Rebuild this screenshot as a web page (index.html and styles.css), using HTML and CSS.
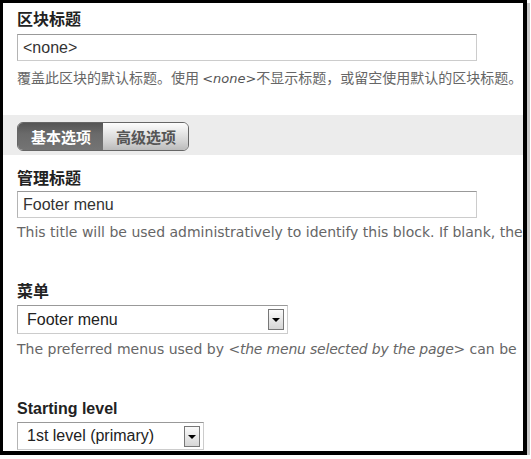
FILE: index.html
```html
<!DOCTYPE html>
<html lang="zh-CN">
<head>
  <meta charset="UTF-8" />
  <title>区块设置</title>
  <link rel="stylesheet" href="styles.css">
</head>
<body>

  <div class="frame">

    <!-- Título del bloque -->
    <div class="form-item item-title">
      <label class="label">区块标题</label>
      <input class="text-input" type="text" value="&lt;none&gt;" />
      <div class="description cjk">覆盖此区块的默认标题。使用 <em>&lt;none&gt;</em>不显示标题，或留空使用默认的区块标题。</div>
    </div>

    <!-- Pestañas -->
    <div class="tabs-bar">
      <div class="tabs">
        <span class="tab active">基本选项</span>
        <span class="tab">高级选项</span>
      </div>
    </div>

    <div class="form-item item-admin">
      <label class="label">管理标题</label>
      <input class="text-input" type="text" value="Footer menu" />
      <div class="description">This title will be used administratively to identify this block. If blank, the</div>
    </div>

    <div class="form-item item-menu">
      <label class="label">菜单</label>
      <div class="select select-menu">
        <span class="select-value">Footer menu</span>
        <span class="select-arrow"></span>
      </div>
      <div class="description">The preferred menus used by <em>&lt;the menu selected by the page&gt;</em> can be</div>
    </div>

    <div class="form-item item-level">
      <label class="label">Starting level</label>
      <div class="select select-level">
        <span class="select-value">1st level (primary)</span>
        <span class="select-arrow"></span>
      </div>
    </div>

  </div>

</body>
</html>
```

FILE: styles.css
```css
body {
  margin: 0;
  padding: 0;
  background: #fff;
  font-family: "Liberation Sans", "Noto Sans CJK SC", sans-serif;
}

/* Marco negro de la captura */
.frame {
  width: 527px;
  height: 455px;
  box-sizing: border-box;
  border-style: solid;
  border-color: #000;
  border-width: 3px 4px 4px 3px;
  box-shadow: 3px 3px 0 #c8c8c8;
  overflow: hidden;
  background: #fff;
}

.form-item {
  padding-left: 14px;
  white-space: nowrap;
}

.label {
  display: block;
  font-size: 16px;
  font-weight: bold;
  line-height: 20px;
  color: #222;
}

.text-input {
  display: block;
  box-sizing: border-box;
  width: 460px;
  height: 27px;
  margin: 0;
  padding: 0 5px;
  border: 1px solid #ccc;
  border-top-color: #999;
  border-left-color: #b4b4b4;
  font-family: "Liberation Sans", sans-serif;
  font-size: 16px;
  color: #333;
  background: #fff;
  outline: none;
}

.description {
  font-family: "DejaVu Sans", "Noto Sans CJK SC", sans-serif;
  font-size: 14px;
  line-height: 18px;
  color: #666;
}

.description em {
  color: #666;
  letter-spacing: -0.2px;
}

.description.cjk {
  font-family: "Noto Sans CJK SC", sans-serif;
  font-size: 14px;
}

.description.cjk em {
  font-family: "DejaVu Sans", sans-serif;
  font-size: 13px;
  letter-spacing: 0;
  color: #555;
}

/* Espaciados de cada campo */
.item-title .label { margin-top: 7px; }
.item-title .text-input { margin-top: 4px; }
.item-title .description { margin-top: 7px; }

.item-admin .label { margin-top: 14px; }
.item-admin .text-input { margin-top: 2px; }
.item-admin .description { margin-top: 5px; }

.item-menu .label { margin-top: 41px; }
.item-menu .select { margin-top: 3px; }
.item-menu .description { margin-top: 6px; }

.item-level .label { margin-top: 41px; }
.item-level .select { margin-top: 3px; }

/* Barra de pestañas */
.tabs-bar {
  margin-top: 27px;
  height: 40px;
  box-sizing: border-box;
  padding: 7px 0 0 14px;
  background: #ececec;
}

.tabs {
  display: inline-flex;
  height: 27px;
  border: 1px solid #666;
  border-radius: 6px;
  overflow: hidden;
}

.tab {
  display: flex;
  align-items: center;
  padding: 0 12px 0 13px;
  font-family: "Noto Sans CJK SC", sans-serif;
  font-size: 15px;
  font-weight: bold;
  color: #555;
  background: linear-gradient(to bottom, #fdfdfd, #d2d2d2 70%, #bbb);
}

.tab.active {
  color: #fff;
  background: linear-gradient(to bottom, #555, #6a6a6a 40%, #747474);
}

/* Selects */
.select {
  display: flex;
  align-items: center;
  justify-content: space-between;
  box-sizing: border-box;
  border: 1px solid #ccc;
  border-top-color: #999;
  border-left-color: #b4b4b4;
  padding: 0 3px 0 9px;
  font-size: 16px;
  color: #222;
  background: #fff;
}

.select-menu {
  width: 271px;
  height: 29px;
}

.select-level {
  width: 187px;
  height: 28px;
}

.select-arrow {
  position: relative;
  width: 16px;
  height: 21px;
  box-sizing: border-box;
  border: 1px solid #777;
  background: linear-gradient(to bottom, #fafafa, #d6d6d6);
}

.select-arrow::before {
  content: '';
  position: absolute;
  left: 3px;
  top: 8px;
  border-left: 4px solid transparent;
  border-right: 4px solid transparent;
  border-top: 4px solid #000;
}
```
